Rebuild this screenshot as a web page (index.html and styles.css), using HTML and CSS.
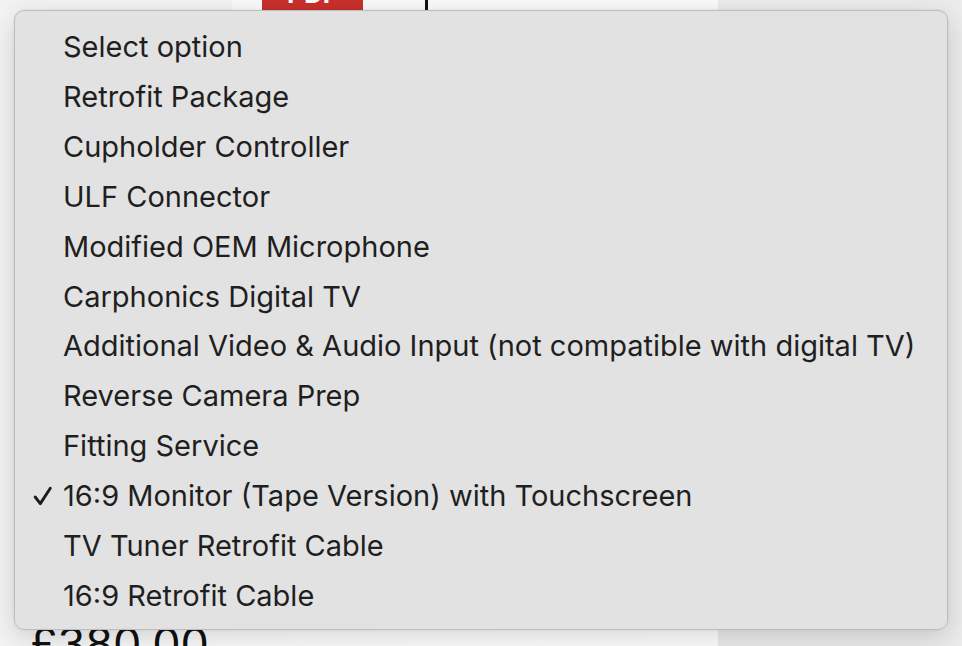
FILE: index.html
```html
<!DOCTYPE html>
<html lang="en">
<head>
<meta charset="utf-8">
<title>Select option</title>
<link rel="stylesheet" href="styles.css">
</head>
<body>
<div class="page">
  <div class="topstrip">
    <div class="side"></div>
    <div class="main-top">
      <div class="pdf-btn"><span>PDF</span></div>
      <div class="caret-line"></div>
    </div>
    <div class="right-panel"></div>
  </div>
  <div class="content">
    <div class="price">£380.00</div>
  </div>
</div>

<div class="menu" role="listbox">
  <div class="item"><span class="check"></span><span class="label">Select option</span></div>
  <div class="item"><span class="check"></span><span class="label">Retrofit Package</span></div>
  <div class="item"><span class="check"></span><span class="label">Cupholder Controller</span></div>
  <div class="item"><span class="check"></span><span class="label">ULF Connector</span></div>
  <div class="item"><span class="check"></span><span class="label">Modified OEM Microphone</span></div>
  <div class="item"><span class="check"></span><span class="label">Carphonics Digital TV</span></div>
  <div class="item"><span class="check"></span><span class="label">Additional Video &amp; Audio Input (not compatible with digital TV)</span></div>
  <div class="item"><span class="check"></span><span class="label">Reverse Camera Prep</span></div>
  <div class="item"><span class="check"></span><span class="label">Fitting Service</span></div>
  <div class="item selected"><span class="check"><svg width="20" height="20" viewBox="0 0 20 20"><path d="M2.2 11 L7.3 17.6 L17.3 2.2" fill="none" stroke="#1c1c1c" stroke-width="2.9" stroke-linecap="round" stroke-linejoin="round"/></svg></span><span class="label">16:9 Monitor (Tape Version) with Touchscreen</span></div>
  <div class="item"><span class="check"></span><span class="label">TV Tuner Retrofit Cable</span></div>
  <div class="item"><span class="check"></span><span class="label">16:9 Retrofit Cable</span></div>
</div>
</body>
</html>
```

FILE: styles.css
```css
html, body {
  margin: 0;
  padding: 0;
}
body {
  width: 962px;
  height: 646px;
  overflow: hidden;
  background: #ffffff;
  font-family: Inter, "Liberation Sans", sans-serif;
  position: relative;
}
.page {
  display: flex;
  flex-direction: column;
  height: 646px;
}
.topstrip {
  display: flex;
  height: 10px;
}
.side {
  width: 232px;
  background: #f3f3f3;
}
.main-top {
  width: 486px;
  display: flex;
  padding-left: 30px;
  box-sizing: border-box;
  background: #fafafa;
}
.pdf-btn {
  width: 101px;
  background: #c9302c;
  overflow: hidden;
}
.pdf-btn span {
  display: block;
  color: #fff;
  font-weight: 700;
  font-size: 26px;
  margin-top: -22px;
  text-align: center;
}
.caret-line {
  width: 3px;
  margin-left: 62px;
  background: #111;
}
.right-panel {
  flex: 1;
  background: #ececec;
}
.content {
  flex: 1;
  display: flex;
  flex-direction: column;
  justify-content: flex-end;
  padding-left: 30px;
  background: linear-gradient(90deg, #f4f4f4 0, #fdfdfd 240px, #fff 718px, #ececec 718px);
}
.price {
  font-size: 45px;
  color: #111;
  line-height: 1;
  margin-bottom: -20px;
}
.menu {
  position: absolute;
  top: 10px;
  left: 14px;
  width: 934px;
  height: 620px;
  box-sizing: border-box;
  padding: 11px 0 9px 0;
  background: rgba(226, 226, 226, 0.985);
  border: 1px solid #bdbdbd;
  border-radius: 10px;
  box-shadow: 0 8px 28px rgba(0, 0, 0, 0.16), 0 0 3px rgba(0, 0, 0, 0.08);
  display: flex;
  flex-direction: column;
}
.item {
  height: 50px;
  display: flex;
  align-items: center;
  color: #1f1f1f;
  font-size: 29px;
}
.check {
  width: 48px;
  display: flex;
  justify-content: flex-end;
  box-sizing: border-box;
}
.check svg {
  display: block;
  margin-right: 10px;
  margin-top: 1px;
}
.label {
  white-space: nowrap;
}
```
